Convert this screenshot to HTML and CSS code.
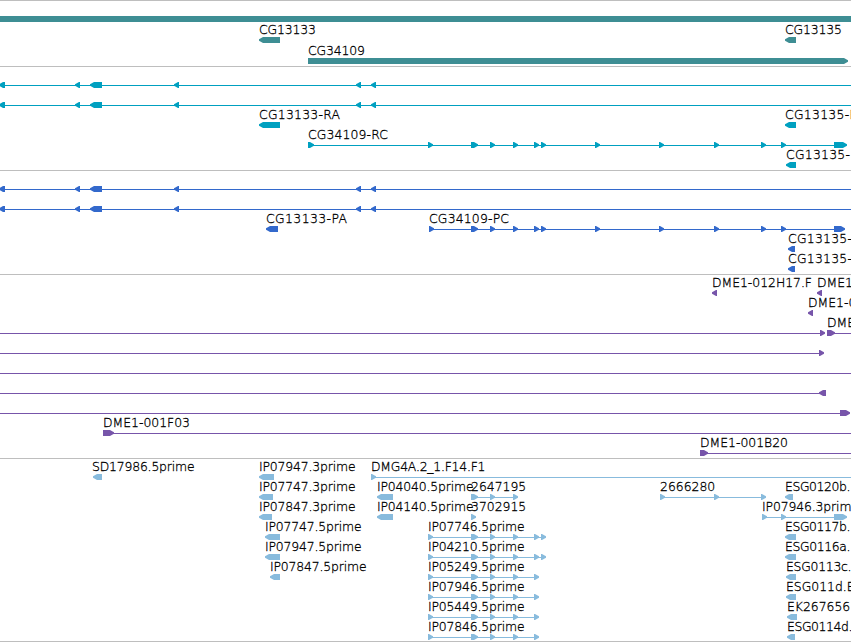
FILE: index.html
```html
<!DOCTYPE html>
<html lang="en">
<head>
    <meta charset="UTF-8">
    <meta name="viewport" content="width=device-width, initial-scale=1.0">
    <title>Genome browser</title>
    <link rel="stylesheet" href="styles.css">
</head>
<body>
    <div class="tracks">
        <div class="track genes" id="genes"></div>
        <div class="track transcripts" id="transcripts"></div>
        <div class="track proteins" id="proteins"></div>
        <div class="track clones" id="clones"></div>
        <div class="track ests" id="ests"></div>
    </div>
    <script src="script.js"></script>
</body>
</html>
```

FILE: styles.css
```css
body {
    margin: 0;
    background-color: #fff;
    overflow: hidden;
}
.tracks {
    width: 851px;
    border-bottom: 1px solid #bebebe;
    overflow: hidden;
}
.track {
    border-top: 1px solid #bebebe;
    padding-bottom: 3px;
}
.row {
    display: block;
    width: 851px;
    height: 20px;
    overflow: visible;
}
.row text {
    font-family: "DejaVu Sans Light", "DejaVu Sans", sans-serif;
    font-size: 12.4px;
    font-weight: 200;
    fill: #000;
    stroke: #000;
    stroke-width: 0.3px;
}
.row rect, .row polygon {
    fill: currentColor;
}
.genes {
    color: #3e8e94;
    padding-bottom: 2px;
}
.genes .row {
    height: 21px;
}
.transcripts {
    color: #00a0c0;
}
.proteins {
    color: #3369cc;
}
.clones {
    color: #7755aa;
}
.ests {
    color: #88bbdd;
    padding-bottom: 2px;
}
```

FILE: script.js
```js
const END = 851;

// exons shared by the long transcripts
const longExons = [[-1, 5], [75, 80], [90, 102], [174, 179], [356, 361], [371, 376]];
const rcExons = [[471, 478], [490, 495], [513, 518], [534, 539], [541, 546], [595, 600],
    [659, 664], [714, 719], [761, 766], [781, 786]];
const estExons = [[428, 433], [471, 478], [490, 495], [513, 518], [534, 539]];

// feature: label, label x, strand, exons, connector line [from, to]
function f(label, x, strand, exons, line) {
    return { label, x, strand, exons, line };
}

const tracks = {
    genes: [
        [f('', 0, '', [[0, END]])],
        [f('CG13133', 259, '-', [[259, 280]]), f('CG13135', 785, '-', [[785, 796]])],
        [f('CG34109', 308, '+', [[308, 848]])]
    ],
    transcripts: [
        [f('', 0, '-', longExons, [0, END])],
        [f('', 0, '-', longExons, [0, END])],
        [f('CG13133-RA', 259, '-', [[259, 280]]), f('CG13135-R', 785, '-', [[785, 796]])],
        [f('CG34109-RC', 308, '+', [[308, 314], [428, 433], ...rcExons, [834, 847]], [308, 845])],
        [f('CG13135-', 786, '-', [[786, 796]])]
    ],
    proteins: [
        [f('', 0, '-', longExons, [0, END])],
        [f('', 0, '-', longExons, [0, END])],
        [f('CG13133-PA', 266, '-', [[266, 278]]),
         f('CG34109-PC', 429, '+', [[429, 434], ...rcExons, [834, 845]], [429, 843])],
        [f('CG13135-', 788, '-', [[788, 795]])],
        [f('CG13135-', 788, '-', [[788, 795]])]
    ],
    clones: [
        [f('DME1-012H17.F', 712, '-', [[712, 717]]), f('DME1', 817, '-', [[817, 822]])],
        [f('DME1-0', 808, '-', [[808, 813]])],
        [f('', 0, '+', [[820, 825]], [0, 822]), f('DME', 827, '+', [[827, 835]], [827, END])],
        [f('', 0, '+', [[819, 824]], [0, 822])],
        [f('', 0, '+', [], [0, END])],
        [f('', 0, '-', [[819, 826]], [0, 826])],
        [f('', 0, '+', [[840, 850]], [0, 848])],
        [f('DME1-001F03', 103, '+', [[103, 114]], [103, END])],
        [f('DME1-001B20', 700, '+', [[700, 708]], [700, END])]
    ],
    ests: [
        [f('SD17986.5prime', 92, '-', [[93, 102]]), f('IP07947.3prime', 259, '-', [[259, 274]]),
         f('DMG4A.2_1.F14.F1', 371, '+', [[371, 376]], [371, END])],
        [f('IP07747.3prime', 259, '-', [[259, 273]]), f('IP04040.5prime', 377, '-', [[377, 393]]),
         f('2647195', 471, '+', [[471, 478], [490, 495], [513, 518]], [471, 516]),
         f('2666280', 660, '+', [[660, 665], [714, 719], [761, 766]], [660, 764]),
         f('ESG0120b.', 785, '-', [[785, 793]])],
        [f('IP07847.3prime', 259, '-', [[259, 272]]), f('IP04140.5prime', 377, '-', [[377, 393]]),
         f('3702915', 471, '+', [[471, 476]]),
         f('IP07946.3prim', 762, '+', [[762, 767], [781, 786], [834, 847]], [762, 845])],
        [f('IP07747.5prime', 265, '-', [[265, 280]]),
         f('IP07746.5prime', 428, '+', [...estExons, [541, 546]], [428, 544]),
         f('ESG0117b.', 785, '-', [[785, 796]])],
        [f('IP07947.5prime', 265, '-', [[265, 280]]),
         f('IP04210.5prime', 428, '+', [...estExons, [541, 546]], [428, 544]),
         f('ESG0116a.', 785, '-', [[785, 796]])],
        [f('IP07847.5prime', 270, '-', [[270, 280]]),
         f('IP05249.5prime', 428, '+', estExons, [428, 537]),
         f('ESG0113c.', 786, '-', [[786, 796]])],
        [f('IP07946.5prime', 428, '+', estExons, [428, 537]), f('ESG011d.E', 786, '-', [[786, 796]])],
        [f('IP05449.5prime', 428, '+', estExons, [428, 537]), f('EK267656', 787, '-', [[787, 797]])],
        [f('IP07846.5prime', 428, '+', estExons, [428, 537]), f('ESG0114d.', 787, '-', [[787, 795]])]
    ]
};

// label widths by kind of name
const widths = [
    [/^CG\d+$/, 57],
    [/^CG\d+-$/, 64],
    [/^CG\d+-R$/, 73],
    [/^CG\d+-(RA|PA)$/, 81],
    [/^CG\d+-(RC|PC)$/, 80],
    [/^IP.*prime$/, 96.5],
    [/^IP.*prim$/, 89.5],
    [/^SD/, 102.5],
    [/^DMG/, 114.5],
    [/^DME1-012H/, 100],
    [/^ESG\d+.\.$/, 65.5]
];

function exon(a, b, strand) {
    const head = Math.min(5, b - a);
    if (strand === '-') {
        return `<polygon points="${a},17.3 ${a + head - 1},15 ${b},15 ${b},21 ${a + head - 1},21 ${a},18.7"/>`;
    }
    if (strand === '+') {
        return `<polygon points="${a},15 ${b - head + 1},15 ${b},17.3 ${b},18.7 ${b - head + 1},21 ${a},21"/>`;
    }
    return `<rect x="${a}" y="15" width="${b - a}" height="6"/>`;
}

function drawLabel(label, x) {
    const match = widths.find(w => w[0].test(label));
    const fit = match ? ` textLength="${match[1]}"` : '';
    return `<text x="${x}" y="12"${fit}>${label}</text>`;
}

function drawRow(features) {
    let out = '';
    features.forEach(function(item) {
        if (item.line) {
            out += `<rect x="${item.line[0]}" y="18" width="${item.line[1] - item.line[0]}" height="1"/>`;
        }
        item.exons.forEach(function(e) {
            out += exon(e[0], e[1], item.strand);
        });
        if (item.label) {
            out += drawLabel(item.label, item.x);
        }
    });
    return `<svg class="row">${out}</svg>`;
}

for (const [id, rows] of Object.entries(tracks)) {
    document.getElementById(id).innerHTML = rows.map(drawRow).join('');
}
```
